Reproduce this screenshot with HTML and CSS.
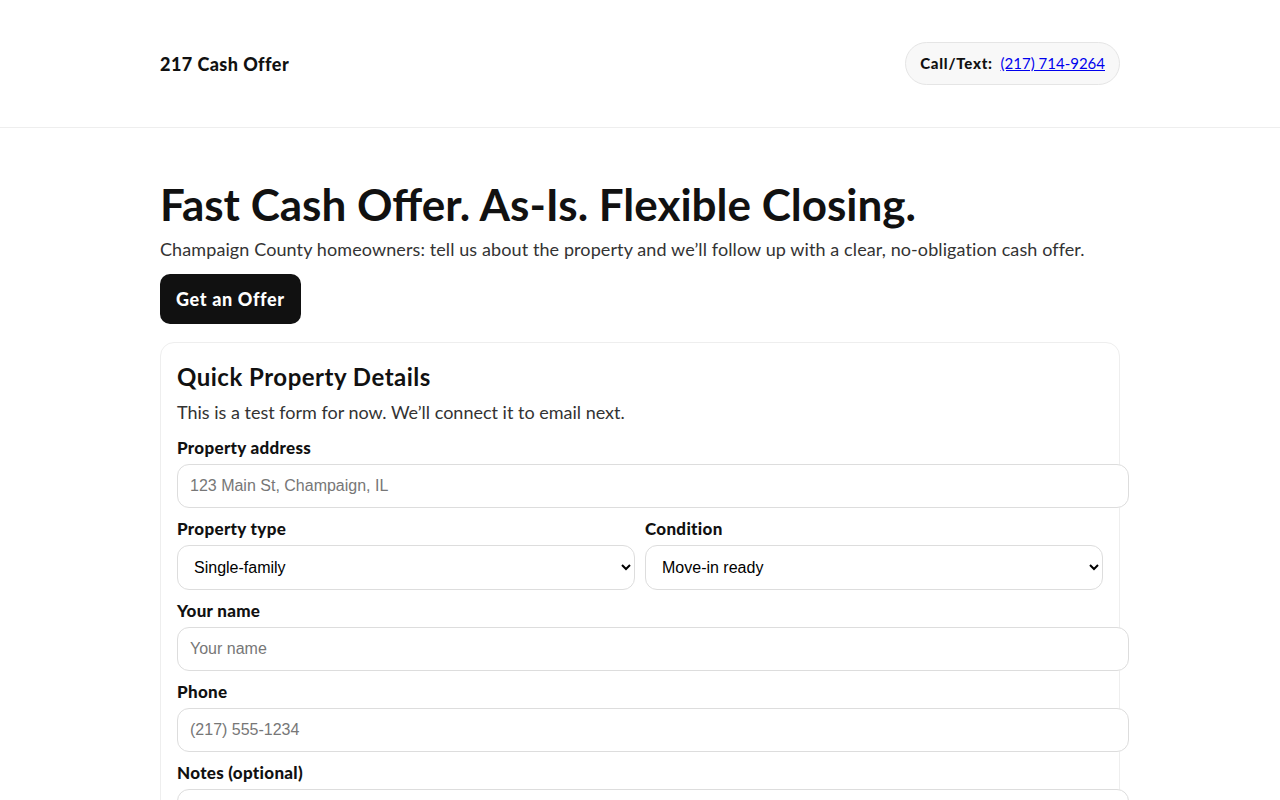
FILE: index.html
```html
<!DOCTYPE html>
<html lang="en">
<head>
<meta charset="utf-8">
<title>217 Cash Offer</title>
<link rel="stylesheet" href="styles.css">
</head>
<body>
<header class="site-header">
  <div class="container header-inner">
    <div class="brand">217 Cash Offer</div>
    <div class="call-pill"><strong>Call/Text:</strong> <a href="#">(217) 714-9264</a></div>
  </div>
</header>
<main class="container main">
  <h1 class="hero-title">Fast Cash Offer. As-Is. Flexible Closing.</h1>
  <p class="hero-sub">Champaign County homeowners: tell us about the property and we’ll follow up with a clear, no-obligation cash offer.</p>
  <a class="btn" href="#">Get an Offer</a>
  <section class="card">
    <h2 class="card-title">Quick Property Details</h2>
    <p class="card-sub">This is a test form for now. We’ll connect it to email next.</p>
    <div class="field">
      <label class="label">Property address</label>
      <input class="input" type="text" placeholder="123 Main St, Champaign, IL">
    </div>
    <div class="row">
      <div class="field">
        <label class="label">Property type</label>
        <select class="select"><option>Single-family</option></select>
      </div>
      <div class="field">
        <label class="label">Condition</label>
        <select class="select"><option>Move-in ready</option></select>
      </div>
    </div>
    <div class="field">
      <label class="label">Your name</label>
      <input class="input" type="text" placeholder="Your name">
    </div>
    <div class="field">
      <label class="label">Phone</label>
      <input class="input" type="text" placeholder="(217) 555-1234">
    </div>
    <div class="field">
      <label class="label">Notes (optional)</label>
      <textarea class="input textarea" rows="4"></textarea>
    </div>
  </section>
</main>
</body>
</html>
```

FILE: styles.css
```css
body {
  margin: 0;
  font-family: "Segoe UI", Lato, "Noto Sans", sans-serif;
  color: #111;
  background: #fff;
}
.container {
  width: 960px;
  margin: 0 auto;
}
.site-header {
  border-bottom: 1px solid #eee;
}
.header-inner {
  display: flex;
  align-items: center;
  justify-content: space-between;
  height: 127px;
}
.brand {
  font-weight: 900;
  font-size: 18px;
  letter-spacing: 0.45px;
}
.call-pill {
  border: 1px solid #e5e5e5;
  background: #f8f8f8;
  border-radius: 999px;
  padding: 10px 14px 10px 14px;
  font-size: 15px;
  line-height: 21px;
}
.call-pill strong {
  font-weight: 900;
  letter-spacing: 0.75px;
  margin-right: 4px;
}
.call-pill a {
  color: #0000ee;
}
.main {
  padding-top: 48px;
}
.hero-title {
  font-size: 44px;
  line-height: 56px;
  margin: 0 0 5px;
  font-weight: 700;
}
.hero-sub {
  font-size: 18px;
  line-height: 24px;
  letter-spacing: 0.1px;
  margin: 0 0 13px;
  color: #333;
}
.btn {
  display: inline-block;
  background: #111;
  color: #fff;
  font-weight: 900;
  font-size: 18px;
  letter-spacing: 0.65px;
  line-height: 50px;
  height: 50px;
  padding: 0 16px;
  border-radius: 10px;
  text-decoration: none;
}
.card {
  margin-top: 18px;
  border: 1px solid #eee;
  border-radius: 14px;
  padding: 18px 16px 16px;
}
.card-title {
  margin: 0;
  font-size: 24px;
  line-height: 32px;
  letter-spacing: 0.5px;
  font-weight: 700;
}
.card-sub {
  margin: 7px 0 14px;
  font-size: 18px;
  line-height: 24px;
  color: #333;
}
.field {
  margin-bottom: 11px;
}
.row .field {
  margin-bottom: 0;
}
.label {
  display: block;
  font-weight: 900;
  font-size: 17px;
  line-height: 20px;
  letter-spacing: 0.3px;
  margin-bottom: 6px;
}
.row {
  display: grid;
  grid-template-columns: 1fr 1fr;
  gap: 10px;
  margin-bottom: 11px;
}
.input {
  display: block;
  width: 100%;
  font-family: "Liberation Sans", Arial, sans-serif;
  font-size: 16px;
  line-height: 18px;
  padding: 12px;
  border: 1px solid #ddd;
  border-radius: 12px;
  color: #111;
  background: #fff;
}
.input::placeholder {
  color: #777;
}
.select {
  display: block;
  width: 100%;
  box-sizing: border-box;
  height: 45px;
  font-family: "Liberation Sans", Arial, sans-serif;
  font-size: 16px;
  padding: 0 12px;
  border: 1px solid #ddd;
  border-radius: 12px;
  background: #fff;
  color: #000;
}
.textarea {
  resize: vertical;
}
```
